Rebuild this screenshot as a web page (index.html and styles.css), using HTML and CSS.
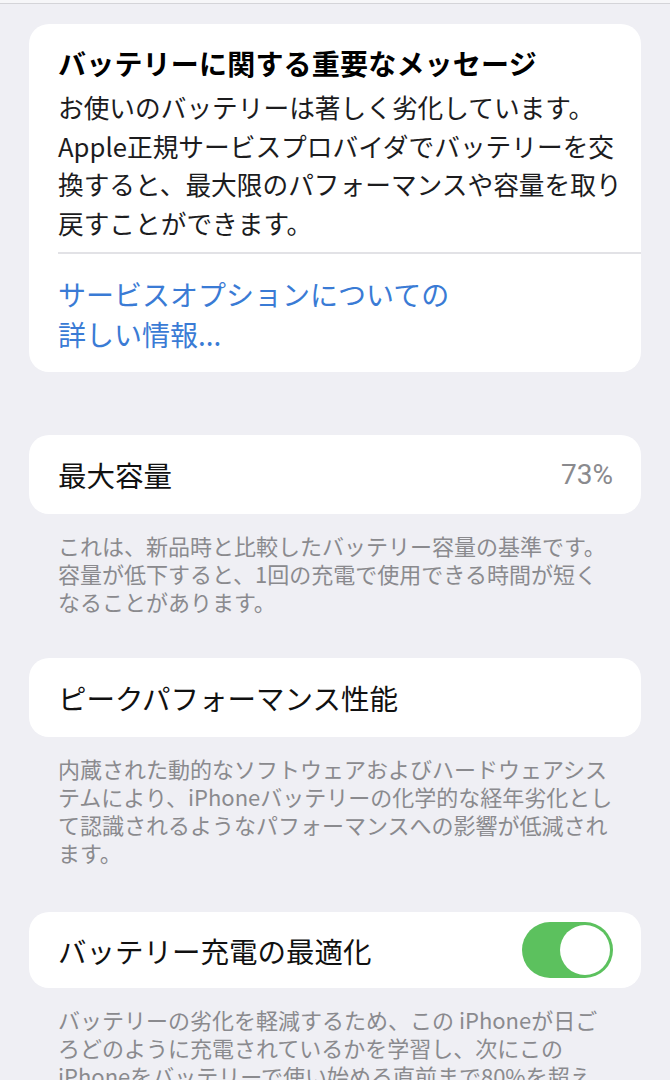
FILE: index.html
```html
<!DOCTYPE html>
<html lang="ja">

<head>
  <meta charset="UTF-8">
  <meta name="viewport" content="width=device-width, initial-scale=1.0">
  <title>バッテリーの状態と充電</title>
  <link rel="stylesheet" href="styles.css">
</head>

<body>
  <div class="topline"></div>

  <div class="page">
    <!-- Important message -->
    <div class="card message">
      <h2 class="message-title">バッテリーに関する重要なメッセージ</h2>
      <p class="message-body">お使いのバッテリーは著しく劣化しています。<br>Apple正規サービスプロバイダでバッテリーを交<br>換すると、最大限のパフォーマンスや容量を取り<br>戻すことができます。</p>
      <div class="divider"></div>
      <a class="message-link" href="#">サービスオプションについての<br>詳しい情報...</a>
    </div>

    <!-- Max capacity -->
    <div class="card row first-row">
      <span class="row-label">最大容量</span>
      <span class="row-value">73%</span>
    </div>
    <p class="footnote">これは、新品時と比較したバッテリー容量の基準です。<br>容量が低下すると、1回の充電で使用できる時間が短く<br>なることがあります。</p>

    <!-- Peak performance -->
    <div class="card row">
      <span class="row-label">ピークパフォーマンス性能</span>
    </div>
    <p class="footnote">内蔵された動的なソフトウェアおよびハードウェアシス<br>テムにより、iPhoneバッテリーの化学的な経年劣化とし<br>て認識されるようなパフォーマンスへの影響が低減され<br>ます。</p>

    <!-- Optimized charging -->
    <div class="card row toggle-row">
      <span class="row-label">バッテリー充電の最適化</span>
      <div class="toggle on"><div class="knob"></div></div>
    </div>
    <p class="footnote">バッテリーの劣化を軽減するため、この iPhoneが日ご<br>ろどのように充電されているかを学習し、次にこの<br>iPhoneをバッテリーで使い始める直前まで80%を超え<br>て充電しないようにします。</p>
  </div>
</body>

</html>
```

FILE: styles.css
```css
/* General */
html, body {
  margin: 0;
  padding: 0;
}

body {
  font-family: 'Noto Sans CJK JP', 'Noto Sans', sans-serif;
  background: #efeff4;
  color: #1c1c1e;
  width: 670px;
  height: 1080px;
  overflow: hidden;
}

.topline {
  height: 3px;
  background: #f6f6f8;
  border-bottom: 1px solid #d4d4d8;
}

.page {
  padding: 20px 29px 0 29px;
}

/* Cards */
.card {
  background: #ffffff;
  border-radius: 20px;
}

.message {
  padding: 20px 0 18px 29px;
}

.message-title {
  margin: 0;
  font-size: 28px;
  font-weight: bold;
  line-height: 38px;
  color: #000;
  letter-spacing: 0.2px;
  white-space: nowrap;
}

.message-body {
  margin: 6px 0 0 0;
  font-size: 25.7px;
  line-height: 38.5px;
  color: #1c1c1e;
  white-space: nowrap;
}

.divider {
  height: 2px;
  background: #e2e2e6;
  margin-top: 10px;
}

.message-link {
  display: block;
  margin-top: 20px;
  font-size: 28px;
  line-height: 40px;
  color: #3a7bd5;
  text-decoration: none;
}

/* Rows */
.row {
  display: flex;
  align-items: center;
  justify-content: space-between;
  height: 79px;
  padding: 0 28px 0 29px;
  margin-top: 43px;
}

.first-row {
  margin-top: 63px;
}

.row-label {
  font-size: 28.5px;
  color: #111;
}

.row-value {
  font-family: 'Roboto', 'Noto Sans', sans-serif;
  font-size: 28px;
  color: #8a8a8e;
}

.toggle-row {
  height: 76px;
  margin-top: 46px;
}

/* Footnotes */
.footnote {
  margin: 0;
  padding: 17px 0 0 29px;
  font-size: 22px;
  line-height: 28px;
  color: #8a8a8e;
  white-space: nowrap;
}

/* Toggle */
.toggle {
  width: 91px;
  height: 56px;
  border-radius: 28px;
  background: #5cc15e;
  position: relative;
}

.toggle .knob {
  position: absolute;
  top: 3px;
  right: 3px;
  width: 50px;
  height: 50px;
  border-radius: 50%;
  background: #fff;
}
```
